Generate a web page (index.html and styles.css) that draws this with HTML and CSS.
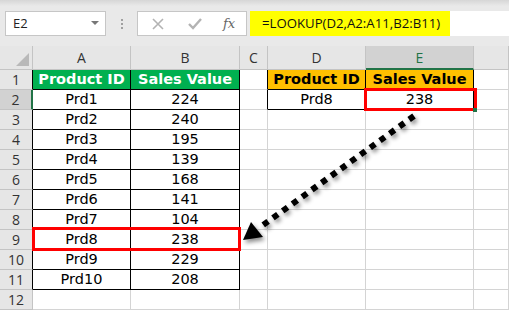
FILE: index.html
```html
<!DOCTYPE html>
<html lang="en">
<head>
    <meta charset="UTF-8">
    <title>LOOKUP example</title>
    <link rel="stylesheet" href="styles.css">
</head>
<body>
<div class="page">
    <div class="toolbar">
        <div class="namebox">E2<span class="caret"></span></div>
        <div class="grip"><i></i><i></i><i></i></div>
        <div class="fbtns">
            <svg width="14" height="14" viewBox="0 0 14 14"><path d="M2 2 L12 12 M12 2 L2 12" stroke="#b3b3b3" stroke-width="1.6"/></svg>
            <svg width="16" height="14" viewBox="0 0 16 14"><path d="M2 7 L6 11 L14 2" stroke="#b3b3b3" stroke-width="2.4" fill="none"/></svg>
            <span class="fx">fx</span>
        </div>
        <div class="formula"><span class="ftext">=LOOKUP(D2,A2:A11,B2:B11)</span></div>
    </div>

    <div class="sheet">
        <div class="hd corner"><span class="tri"></span></div>
        <div class="hd">A</div>
        <div class="hd">B</div>
        <div class="hd">C</div>
        <div class="hd">D</div>
        <div class="hd sel">E</div>
        <div class="hd last"></div>

        <div class="rh dark">1</div>
        <div class="c t g">Product ID</div>
        <div class="c t g">Sales Value</div>
        <div class="c br"></div>
        <div class="c t o">Product ID</div>
        <div class="c t o">Sales Value</div>
        <div class="c"></div>

        <div class="rh dark sel">2</div>
        <div class="c t">Prd1</div>
        <div class="c t">224</div>
        <div class="c br"></div>
        <div class="c t">Prd8</div>
        <div class="c t">238</div>
        <div class="c"></div>

        <div class="rh dark">3</div><div class="c t">Prd2</div><div class="c t">240</div><div class="c"></div><div class="c"></div><div class="c"></div><div class="c"></div>
        <div class="rh dark">4</div><div class="c t">Prd3</div><div class="c t">195</div><div class="c"></div><div class="c"></div><div class="c"></div><div class="c"></div>
        <div class="rh dark">5</div><div class="c t">Prd4</div><div class="c t">139</div><div class="c"></div><div class="c"></div><div class="c"></div><div class="c"></div>
        <div class="rh dark">6</div><div class="c t">Prd5</div><div class="c t">168</div><div class="c"></div><div class="c"></div><div class="c"></div><div class="c"></div>
        <div class="rh dark">7</div><div class="c t">Prd6</div><div class="c t">141</div><div class="c"></div><div class="c"></div><div class="c"></div><div class="c"></div>
        <div class="rh dark">8</div><div class="c t">Prd7</div><div class="c t">104</div><div class="c"></div><div class="c"></div><div class="c"></div><div class="c"></div>
        <div class="rh dark">9</div><div class="c t">Prd8</div><div class="c t">238</div><div class="c"></div><div class="c"></div><div class="c"></div><div class="c"></div>
        <div class="rh dark">10</div><div class="c t">Prd9</div><div class="c t">229</div><div class="c"></div><div class="c"></div><div class="c"></div><div class="c"></div>
        <div class="rh dark">11</div><div class="c t">Prd10</div><div class="c t">208</div><div class="c"></div><div class="c"></div><div class="c"></div><div class="c"></div>
        <div class="rh">12</div><div class="c"></div><div class="c"></div><div class="c"></div><div class="c"></div><div class="c"></div><div class="c"></div>

        <div class="mark mark-a9"></div>
        <div class="mark mark-e2"></div>
        <div class="handle"></div>
    </div>

    <svg class="arrow" width="509" height="310" viewBox="0 0 509 310">
        <line x1="414" y1="116" x2="259" y2="228" stroke="#000" stroke-width="6" stroke-dasharray="6 6"/>
        <polygon points="243,240 251,222 263,237" fill="#000"/>
    </svg>
</div>
</body>
</html>
```

FILE: styles.css
```css
body {
    margin: 0;
    padding: 0;
    background: #fff;
    font-family: "DejaVu Sans", Verdana, sans-serif;
}

.page {
    position: relative;
    width: 509px;
    height: 310px;
    overflow: hidden;
}

/* formula bar */
.toolbar {
    height: 46px;
    display: flex;
    align-items: flex-start;
    padding-top: 11px;
    box-sizing: border-box;
    background: linear-gradient(#d6d6d6, #e9e9e9 6px, #e9e9e9);
}

.namebox {
    width: 101px;
    height: 25px;
    margin-left: 5px;
    box-sizing: border-box;
    border: 1px solid #c6c6c6;
    background: #fff;
    font-family: "Open Sans", sans-serif;
    font-size: 13px;
    line-height: 23px;
    padding-left: 7px;
    color: #222;
    position: relative;
}

.caret {
    position: absolute;
    right: 6px;
    top: 9px;
    border-left: 4px solid transparent;
    border-right: 4px solid transparent;
    border-top: 4px solid #777;
}

.grip {
    width: 31px;
    height: 25px;
    display: flex;
    flex-direction: column;
    align-items: center;
    justify-content: center;
    gap: 2px;
}

.grip i {
    width: 2px;
    height: 2px;
    background: #a0a0a0;
}

.fbtns {
    width: 110px;
    height: 25px;
    box-sizing: border-box;
    border: 1px solid #c6c6c6;
    background: #fff;
    display: flex;
    align-items: center;
    padding-left: 13px;
    gap: 22px;
}

.fx {
    font-family: "DejaVu Serif", serif;
    font-style: italic;
    font-size: 13px;
    color: #666;
    margin-left: -2px;
}

.formula {
    flex: 1;
    height: 25px;
    margin-left: 3px;
    background: #fff;
}

.ftext {
    display: inline-block;
    width: 200px;
    height: 25px;
    box-sizing: border-box;
    padding-left: 12px;
    background: #ffff00;
    font-family: "Open Sans", sans-serif;
    font-size: 13.2px;
    line-height: 25px;
    color: #111;
}

/* sheet grid */
.sheet {
    position: relative;
    display: grid;
    grid-template-columns: 33px 98px 109px 28px 98px 108px 1fr;
    grid-template-rows: 24px repeat(12, 20px);
}

.sheet > div {
    box-sizing: border-box;
    border-right: 1px solid #d4d4d4;
    border-bottom: 1px solid #d4d4d4;
    text-align: center;
    white-space: nowrap;
}

.sheet > .hd {
    background: #e6e6e6;
    border-right-color: #c4c4c4;
    border-bottom-color: #c4c4c4;
    font-family: "Open Sans", sans-serif;
    font-size: 14px;
    line-height: 23px;
    color: #333;
}

.sheet > .hd.sel {
    background: #d2d2d2;
    color: #217346;
    border-bottom: 2px solid #217346;
}

.corner {
    position: relative;
}

.tri {
    position: absolute;
    right: 3px;
    bottom: 3px;
    border-left: 13px solid transparent;
    border-bottom: 13px solid #b9b9b9;
}

.sheet > .rh {
    background: #e6e6e6;
    border-bottom-color: #c4c4c4;
    border-right-color: #c4c4c4;
    font-family: "Open Sans", sans-serif;
    font-size: 14px;
    line-height: 19px;
    color: #333;
}

.sheet > .rh.dark {
    border-right-color: #000;
}

.sheet > .rh.sel {
    background: #d2d2d2;
    border-right: 2px solid #217346;
}

.c {
    font-size: 14.5px;
    line-height: 19px;
    color: #000;
}

.sheet > .t,
.sheet > .br {
    border-right-color: #000;
}

.sheet > .t {
    border-bottom-color: #000;
}

.g {
    background: #00b050;
    color: #fff;
    font-weight: bold;
}

.o {
    background: #ffc000;
    font-weight: bold;
}

/* highlight boxes */
.sheet > .mark {
    position: absolute;
    box-sizing: border-box;
    border: 3px solid #ff0000;
}

.mark-a9 {
    left: 32px;
    top: 181px;
    width: 209px;
    height: 24px;
}

.mark-e2 {
    left: 364px;
    top: 42px;
    width: 113px;
    height: 23px;
}

.sheet > .handle {
    position: absolute;
    left: 473px;
    top: 62px;
    width: 4px;
    height: 4px;
    border: 0;
    background: #217346;
}

.arrow {
    position: absolute;
    left: 0;
    top: 0;
    filter: drop-shadow(2px 3px 2px rgba(0, 0, 0, 0.45));
}
```
